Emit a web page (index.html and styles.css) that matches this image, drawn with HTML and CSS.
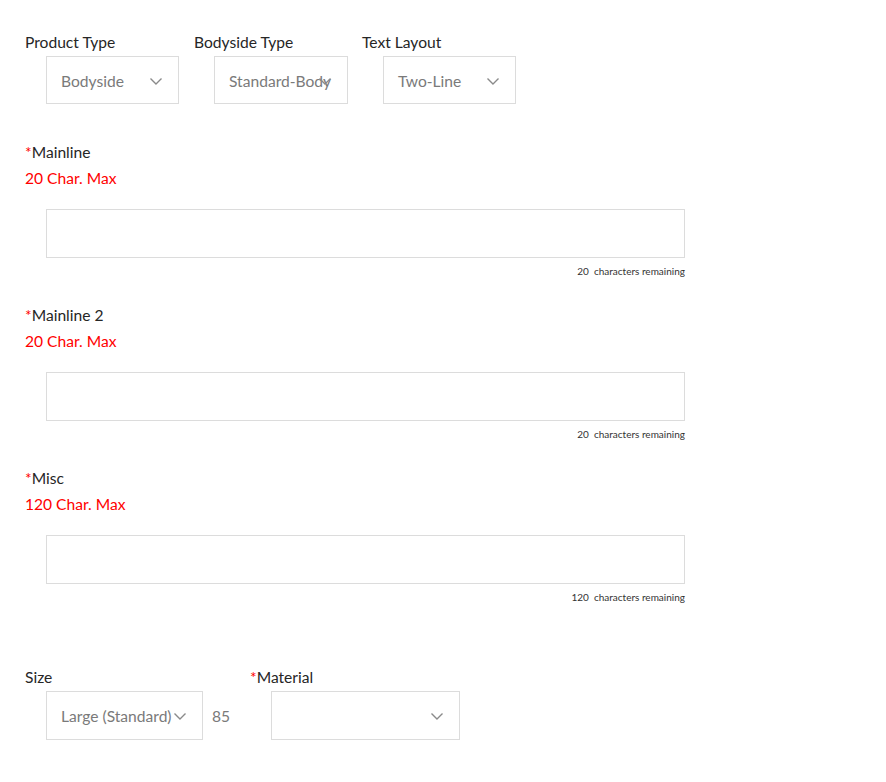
FILE: index.html
```html
<!DOCTYPE html>
<html>
<head>
<meta charset="utf-8">
<link rel="stylesheet" href="styles.css">
</head>
<body>
<form class="form">
  <div class="row">
    <div class="field col">
      <div class="label">Product Type</div>
      <div class="select w133"><span class="value">Bodyside</span><svg class="chev" viewBox="0 0 12 7"><polyline points="0.5,0.5 6,6 11.5,0.5"/></svg></div>
    </div>
    <div class="field col">
      <div class="label">Bodyside Type</div>
      <div class="select w133 shift"><span class="value">Standard-Body</span><svg class="chev" viewBox="0 0 12 7"><polyline points="0.5,0.5 6,6 11.5,0.5"/></svg></div>
    </div>
    <div class="field col">
      <div class="label">Text Layout</div>
      <div class="select w133"><span class="value">Two-Line</span><svg class="chev" viewBox="0 0 12 7"><polyline points="0.5,0.5 6,6 11.5,0.5"/></svg></div>
    </div>
  </div>

  <div class="textfield first">
    <div class="tlabel"><span class="req">*</span>Mainline</div>
    <div class="max">20 Char. Max</div>
    <div class="input"></div>
    <div class="remain">20&nbsp; characters remaining</div>
  </div>

  <div class="textfield">
    <div class="tlabel"><span class="req">*</span>Mainline 2</div>
    <div class="max">20 Char. Max</div>
    <div class="input"></div>
    <div class="remain">20&nbsp; characters remaining</div>
  </div>

  <div class="textfield">
    <div class="tlabel"><span class="req">*</span>Misc</div>
    <div class="max">120 Char. Max</div>
    <div class="input"></div>
    <div class="remain">120&nbsp; characters remaining</div>
  </div>

  <div class="row bottom">
    <div class="field">
      <div class="label">Size</div>
      <div class="inline">
        <div class="select w157"><span class="value">Large (Standard)</span><svg class="chev" viewBox="0 0 12 7"><polyline points="0.5,0.5 6,6 11.5,0.5"/></svg></div>
        <span class="num">85</span>
      </div>
    </div>
    <div class="field">
      <div class="label"><span class="req">*</span>Material</div>
      <div class="select w189"><span class="value"></span><svg class="chev" viewBox="0 0 12 7"><polyline points="0.5,0.5 6,6 11.5,0.5"/></svg></div>
    </div>
  </div>
</form>
</body>
</html>
```
FILE: styles.css
```css
html, body {
  margin: 0;
  padding: 0;
  background: #fff;
}
body {
  font-family: Lato, "Liberation Sans", sans-serif;
  font-size: 15.6px;
  color: #262626;
}
.form {
  padding: 32px 0 0 25px;
}
.row {
  display: flex;
}
.col {
  width: 168px;
  flex: none;
}
.col:first-child {
  width: 169px;
}
.label {
  line-height: 20px;
  height: 20px;
  margin-bottom: 4px;
}
.select {
  position: relative;
  box-sizing: border-box;
  height: 48px;
  margin-left: 21px;
  border: 1px solid #dcdcdc;
  padding: 1px 0 0 14px;
  display: flex;
  align-items: center;
  color: #7a7a7a;
  white-space: nowrap;
  overflow: hidden;
}
.select.shift {
  margin-left: 20px;
  width: 134px;
}
.w133 { width: 133px; }
.w157 { width: 157px; }
.w189 { width: 189px; }
.chev {
  position: absolute;
  right: 16px;
  top: 21px;
  width: 12px;
  height: 7px;
  fill: none;
  stroke: #8a8a8a;
  stroke-width: 1.4;
}
.textfield {
  width: 660px;
}
.textfield.first {
  margin-top: 35px;
}
.tlabel, .max {
  line-height: 26px;
  height: 26px;
}
.req {
  color: #f00;
}
.max {
  color: #f00;
}
.input {
  box-sizing: border-box;
  height: 49px;
  margin: 18px 0 0 21px;
  border: 1px solid #dcdcdc;
}
.remain {
  text-align: right;
  font-size: 10px;
  line-height: 14px;
  margin: 6px 0 24px;
  color: #333;
}
.bottom {
  margin-top: 63px;
}
.bottom .label {
  margin-bottom: 4px;
}
.select.w157, .select.w189 {
  height: 49px;
}
.inline {
  display: flex;
  align-items: center;
}
.num {
  margin-left: 9px;
  width: 38px;
  color: #7a7a7a;
}
```
